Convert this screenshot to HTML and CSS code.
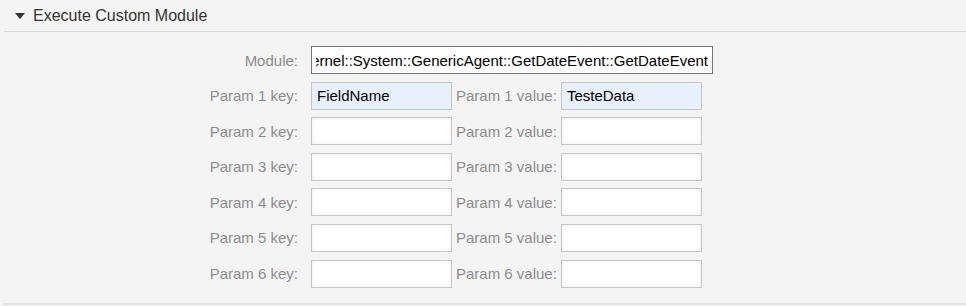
FILE: index.html
```html
<!DOCTYPE html>
<html lang="en">
<head>
  <meta charset="UTF-8">
  <title>Execute Custom Module</title>
  <link rel="stylesheet" href="styles.css">
</head>
<body>
  <div class="widget">
    <div class="widget-header">
      <span class="toggle"></span>
      <h2>Execute Custom Module</h2>
    </div>

    <div class="widget-content">
      <div class="field-row">
        <label class="key-label">Module:</label>
        <input type="text" class="module-input" value="Kernel::System::GenericAgent::GetDateEvent::GetDateEvent">
      </div>

      <div class="field-row">
        <label class="key-label">Param 1 key:</label>
        <input type="text" class="param-input filled" value="FieldName">
        <label class="value-label">Param 1 value:</label>
        <input type="text" class="param-input filled" value="TesteData">
      </div>

      <div class="field-row">
        <label class="key-label">Param 2 key:</label>
        <input type="text" class="param-input">
        <label class="value-label">Param 2 value:</label>
        <input type="text" class="param-input">
      </div>

      <div class="field-row">
        <label class="key-label">Param 3 key:</label>
        <input type="text" class="param-input">
        <label class="value-label">Param 3 value:</label>
        <input type="text" class="param-input">
      </div>

      <div class="field-row">
        <label class="key-label">Param 4 key:</label>
        <input type="text" class="param-input">
        <label class="value-label">Param 4 value:</label>
        <input type="text" class="param-input">
      </div>

      <div class="field-row">
        <label class="key-label">Param 5 key:</label>
        <input type="text" class="param-input">
        <label class="value-label">Param 5 value:</label>
        <input type="text" class="param-input">
      </div>

      <div class="field-row">
        <label class="key-label">Param 6 key:</label>
        <input type="text" class="param-input">
        <label class="value-label">Param 6 value:</label>
        <input type="text" class="param-input">
      </div>
    </div>
  </div>
</body>
</html>
```

FILE: styles.css
```css
body {
  margin: 0;
  background: #f4f4f4;
  font-family: 'Liberation Sans', Arial, sans-serif;
}

.widget {
  margin-left: 3px;
  border-bottom: 2px solid #e4e4e4;
}

.widget-header {
  display: flex;
  align-items: center;
  height: 31px;
  margin-left: 1px;
  border-bottom: 1px solid #d8d8d8;
}

.toggle {
  width: 0;
  height: 0;
  margin-left: 11px;
  margin-right: 8px;
  border-left: 5px solid transparent;
  border-right: 5px solid transparent;
  border-top: 6px solid #333;
}

.widget-header h2 {
  margin: 0;
  font-size: 16px;
  font-weight: normal;
  color: #333;
}

.widget-content {
  padding: 14px 0 15px;
}

.field-row {
  display: flex;
  align-items: center;
  margin-bottom: 7.6px;
}

.field-row:last-child {
  margin-bottom: 0;
}

label {
  font-size: 15px;
  color: #8c8c8c;
}

.key-label {
  width: 295px;
  margin-right: 13px;
  text-align: right;
}

.value-label {
  margin-left: 4px;
  margin-right: 4px;
}

input {
  box-sizing: border-box;
  height: 28px;
  padding: 0 5px;
  border: 1px solid #c6c6c6;
  background: #fff;
  box-shadow: inset 0 0 4px rgba(0,0,0,0.08);
  font-family: 'Liberation Sans', Arial, sans-serif;
  font-size: 15px;
  color: #000;
}

.param-input {
  width: 141px;
}

.param-input.filled {
  background: #e8f0fe;
  box-shadow: none;
}

.module-input {
  width: 402px;
  direction: rtl;
  padding: 0 4px;
  border-color: #777;
  box-shadow: none;
}
```
